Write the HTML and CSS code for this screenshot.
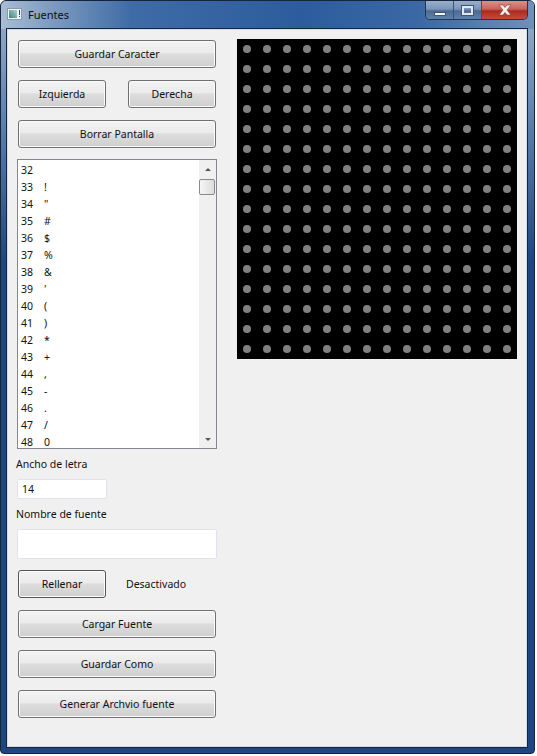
FILE: index.html
```html
<!DOCTYPE html>
<html lang="es">
<head>
    <meta charset="UTF-8">
    <meta name="viewport" content="width=device-width, initial-scale=1.0">
    <title>Fuentes</title>
    <link rel="stylesheet" href="styles.css">
</head>
<body>
    <div class="window">
        <div class="titlebar">
            <svg class="app-icon" width="15" height="12" viewBox="0 0 15 12">
                <defs>
                    <linearGradient id="iconFill" x1="0" y1="1" x2="1" y2="0">
                        <stop offset="0" stop-color="#2f8a7a"/>
                        <stop offset="1" stop-color="#b9cbd2"/>
                    </linearGradient>
                </defs>
                <rect x="0.5" y="0.5" width="14" height="11" fill="#eef2f5" stroke="#8b99a6"/>
                <rect x="2" y="2" width="8" height="8" fill="url(#iconFill)"/>
                <rect x="12" y="2" width="1" height="5" fill="#33475c"/>
                <rect x="12" y="8" width="1" height="1" fill="#33475c"/>
            </svg>
            <span class="title">Fuentes</span>
            <div class="controls">
                <div class="ctl ctl-min"><span class="glyph-min"></span></div>
                <div class="ctl ctl-max"><span class="glyph-max"></span></div>
                <div class="ctl ctl-close">
                    <svg width="16" height="12" viewBox="0 0 16 12">
                        <path d="M2 1h4l2 2.5L10 1h4l-4 5 4 5h-4L8 8.5 6 11H2l4-5z" fill="#f4f1ee" stroke="#7a3a30" stroke-width="0.6"/>
                    </svg>
                </div>
            </div>
        </div>

        <div class="client">
            <div class="sidebar">
                <button class="btn">Guardar Caracter</button>
                <div class="row-between">
                    <button class="btn btn-small">Izquierda</button>
                    <button class="btn btn-small">Derecha</button>
                </div>
                <button class="btn">Borrar Pantalla</button>

                <div class="listbox">
                    <ul class="chars">
                        <li><span>32</span></li>
                        <li><span>33</span>!</li>
                        <li><span>34</span>"</li>
                        <li><span>35</span>#</li>
                        <li><span>36</span>$</li>
                        <li><span>37</span>%</li>
                        <li><span>38</span>&amp;</li>
                        <li><span>39</span>'</li>
                        <li><span>40</span>(</li>
                        <li><span>41</span>)</li>
                        <li><span>42</span>*</li>
                        <li><span>43</span>+</li>
                        <li><span>44</span>,</li>
                        <li><span>45</span>-</li>
                        <li><span>46</span>.</li>
                        <li><span>47</span>/</li>
                        <li><span>48</span>0</li>
                    </ul>
                    <div class="scrollbar">
                        <div class="arrow arrow-up"></div>
                        <div class="thumb"></div>
                        <div class="arrow arrow-down"></div>
                    </div>
                </div>

                <label class="field-label">Ancho de letra</label>
                <input class="input input-small" type="text" value="14">
                <label class="field-label">Nombre de fuente</label>
                <input class="input input-wide" type="text">

                <div class="row-fill">
                    <button class="btn btn-small btn-dark">Rellenar</button>
                    <span class="status">Desactivado</span>
                </div>

                <button class="btn">Cargar Fuente</button>
                <button class="btn">Guardar Como</button>
                <button class="btn">Generar Archvio fuente</button>
            </div>

            <svg class="canvas" width="280" height="320">
                <defs>
                    <pattern id="dots" width="20" height="20" patternUnits="userSpaceOnUse">
                        <circle cx="10" cy="10" r="4" fill="#808080"/>
                    </pattern>
                </defs>
                <rect width="280" height="320" fill="#000"/>
                <rect width="280" height="320" fill="url(#dots)"/>
            </svg>
        </div>
    </div>
</body>
</html>
```

FILE: styles.css
```css
html, body {
    margin: 0;
    height: 100%;
    background: #fff;
}

body {
    font-family: "Noto Sans", sans-serif;
    font-size: 10.5px;
    color: #111;
    overflow: hidden;
}

.window {
    width: 535px;
    height: 754px;
    box-sizing: border-box;
    padding: 0 7px 6px 6px;
    border: 1px solid #16243c;
    border-radius: 6px 6px 4px 4px;
    background: linear-gradient(180deg, #9db2cc 0, #5d80ad 120px, #1f4680 260px);
}

.titlebar {
    display: flex;
    align-items: flex-start;
    height: 28px;
    margin: 0 -7px 0 -6px;
    padding: 0 0 0 6px;
    background: linear-gradient(90deg, #a9bdd4 0, #86a2c4 40px, #3f6ca6 130px, #2c5c9c 300px, #3a69a4 420px, #6f91ba 534px);
    border-radius: 6px 6px 0 0;
}

.app-icon {
    margin: 7px 0 0 0;
}

.title {
    margin: 6px 0 0 6px;
    font-size: 11px;
    line-height: 15px;
    color: #0b0f16;
}

.controls {
    display: flex;
    height: 18px;
    margin: 0 6px 0 auto;
    border: 1px solid #22344f;
    border-top: none;
    border-radius: 0 0 5px 5px;
    overflow: hidden;
}

.ctl {
    display: flex;
    align-items: center;
    justify-content: center;
}

.ctl-min,
.ctl-max {
    width: 27px;
    background: linear-gradient(#98aecb 0, #7c96b8 45%, #4a6a94 55%, #5f82ab 100%);
    border-right: 1px solid #3a5273;
}

.ctl-close {
    width: 45px;
    background: linear-gradient(#d99488 0, #c9625a 45%, #ae2a1e 55%, #c64a3c 100%);
}

.glyph-min {
    width: 10px;
    height: 2px;
    margin-top: 7px;
    background: #f2f5f9;
    border: 1px solid #42566f;
}

.glyph-max {
    width: 7px;
    height: 5px;
    border: 2px solid #dfe6ee;
    outline: 1px solid #42566f;
}

.client {
    display: flex;
    gap: 20px;
    height: 718px;
    box-sizing: border-box;
    padding: 9px 0 0 9px;
    background: #f0f0f0;
    border: 1px solid #cfdcec;
    outline: 1px solid #16243c;
}

.sidebar {
    display: flex;
    flex-direction: column;
    width: 200px;
}

.btn {
    display: block;
    width: 198px;
    height: 28px;
    margin: 1px 1px 11px;
    padding: 0;
    font: inherit;
    color: #111;
    background: linear-gradient(#f3f3f3 0, #ebebeb 45%, #dddddd 50%, #cfcfcf 100%);
    border: 1px solid #707070;
    border-radius: 3px;
    box-shadow: inset 0 0 0 1px #fbfbfb;
}

.row-between {
    display: flex;
    justify-content: space-between;
    margin: 0 1px;
}

.row-between .btn {
    margin-left: 0;
    margin-right: 0;
}

.btn-small {
    width: 88px;
}

.btn-dark {
    margin: 0;
    border-color: #555;
}

.listbox {
    display: flex;
    height: 290px;
    box-sizing: border-box;
    margin-bottom: 1px;
    background: #fff;
    border: 1px solid #828790;
}

.chars {
    flex: 1;
    margin: 0;
    padding: 2px 0 0 3px;
    list-style: none;
    overflow: hidden;
}

.chars li {
    height: 17px;
    line-height: 17px;
}

.chars span {
    display: inline-block;
    width: 23px;
}

.scrollbar {
    display: flex;
    flex-direction: column;
    width: 17px;
    background: #f0f0f0;
}

.arrow {
    width: 0;
    height: 0;
    margin: 8px auto;
    border-left: 3px solid transparent;
    border-right: 3px solid transparent;
}

.arrow-up {
    border-bottom: 3px solid #555;
}

.arrow-down {
    margin-top: auto;
    margin-bottom: 7px;
    border-top: 3px solid #555;
}

.thumb {
    width: 16px;
    height: 16px;
    box-sizing: border-box;
    background: linear-gradient(90deg, #f6f6f6, #dcdcdc);
    border: 1px solid #8a8a8a;
    border-radius: 2px;
}

.field-label {
    margin: 7px 0 0 -1px;
    height: 15px;
    line-height: 15px;
}

.input {
    box-sizing: border-box;
    display: block;
    padding: 0 0 0 4px;
    font: inherit;
    color: #111;
    background: #fff;
    border: 1px solid #e2e3ea;
    border-radius: 2px;
    outline: none;
}

.input-small {
    width: 90px;
    height: 20px;
    margin: 7px 0 1px;
}

.input-wide {
    width: 200px;
    height: 30px;
    margin: 7px 0 11px;
}

.row-fill {
    display: flex;
    align-items: center;
    gap: 20px;
    margin: 0 1px 11px;
}

.canvas {
    display: block;
}
```
